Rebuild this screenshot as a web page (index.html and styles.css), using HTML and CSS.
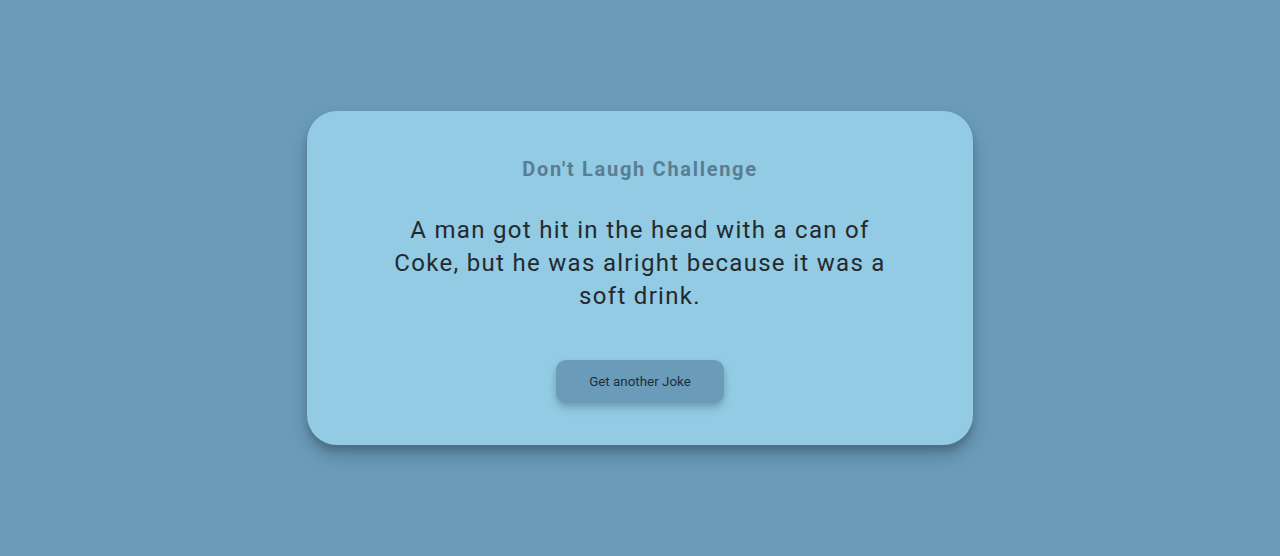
FILE: index.html
```html
<!DOCTYPE html>
<html lang="en">
<head>
<meta charset="utf-8">
<title>Don't Laugh Challenge</title>
<link rel="stylesheet" href="styles.css">
</head>
<body>
<main class="page">
  <section class="card">
    <h3 class="title">Don't Laugh Challenge</h3>
    <p class="joke">A man got hit in the head with a can of Coke, but he was alright because it was a soft drink.</p>
    <button class="btn">Get another Joke</button>
  </section>
</main>
</body>
</html>
```
FILE: styles.css
```css
html, body {
  margin: 0;
  padding: 0;
  height: 100%;
}
body {
  background: #6a9cba;
  font-family: Roboto, "Liberation Sans", sans-serif;
}
.page {
  height: 556px;
  display: flex;
  align-items: center;
  justify-content: center;
}
.card {
  box-sizing: border-box;
  width: 666px;
  height: 334px;
  background: #92cbe3;
  border-radius: 30px;
  box-shadow: 0 10px 20px rgba(0, 0, 0, 0.2), 0 6px 6px rgba(0, 0, 0, 0.15);
  display: flex;
  flex-direction: column;
  align-items: center;
  padding: 46px 40px 0;
}
.title {
  margin: 0;
  font-size: 20px;
  line-height: 24px;
  font-weight: 700;
  letter-spacing: 1.7px;
  color: #5a7d93;
}
.joke {
  margin: 33px 0 0;
  width: 520px;
  text-align: center;
  font-size: 24px;
  line-height: 33px;
  letter-spacing: 1.3px;
  color: #24292d;
}
.btn {
  margin-top: 47px;
  width: 168px;
  height: 43px;
  border: none;
  border-radius: 10px;
  background: #6a9cba;
  color: #1f2d38;
  font-family: Roboto, "Liberation Sans", sans-serif;
  font-size: 13.4px;
  box-shadow: 0 5px 10px rgba(0, 0, 0, 0.15), 0 3px 5px rgba(0, 0, 0, 0.1);
  cursor: pointer;
}
```
